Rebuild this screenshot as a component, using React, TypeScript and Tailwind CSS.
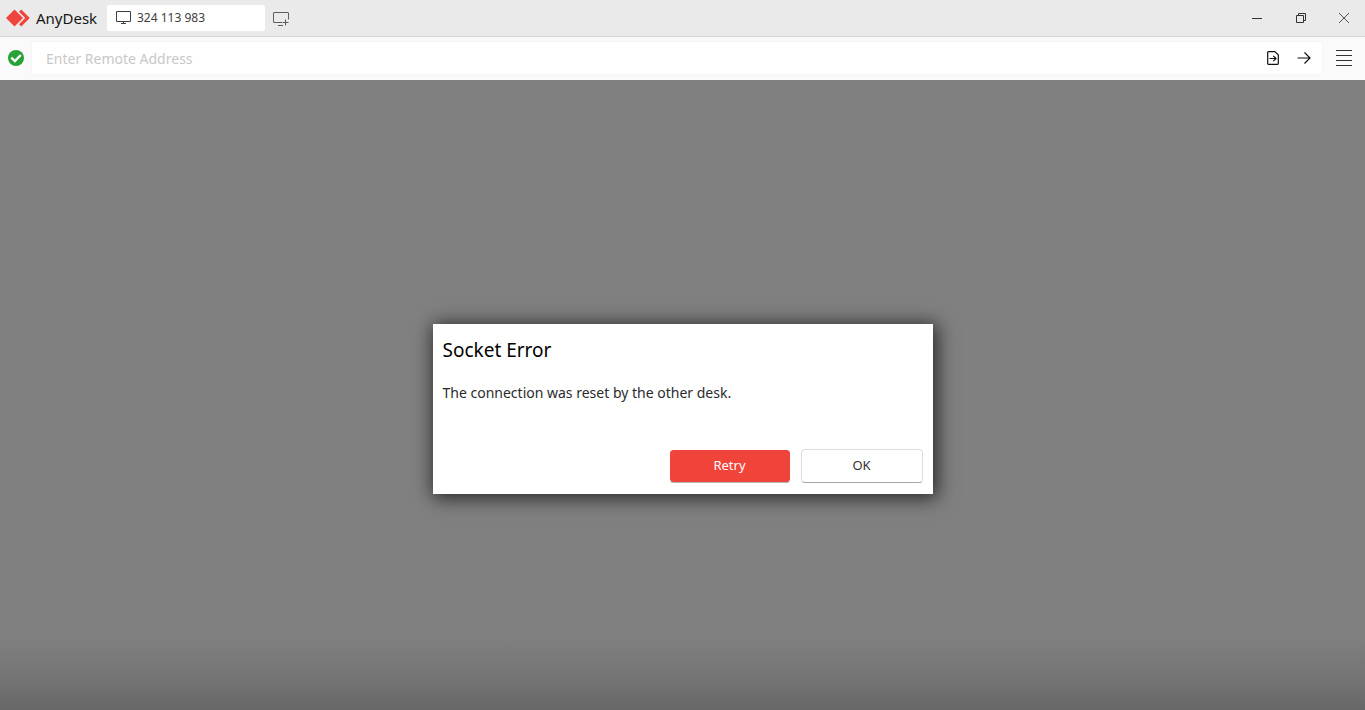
import React, { useState } from 'react';

function Logo() {
  return (
    <svg width="24" height="18" viewBox="0 0 24 18" fill="#ef443b" aria-hidden="true">
      <path d="M8.5 0.5 17 9 8.5 17.5 0 9Z" />
      <path d="M13 2.8 15.3 0.5 23.8 9 15.3 17.5 13 15.2 19.2 9Z" />
    </svg>
  );
}

function MonitorIcon() {
  return (
    <svg width="16" height="14" viewBox="0 0 16 14" fill="none" stroke="#3c3f44" aria-hidden="true">
      <path d="M.5 .5H14.5V10.5H.5ZM7.5 10.5V12M5 12.5H10" />
    </svg>
  );
}

function NewTabIcon() {
  return (
    <svg width="18" height="16" viewBox="0 0 18 16" fill="none" stroke="#5c5c5c" aria-hidden="true">
      <path d="M10 11.5H2Q1.5 11.5 1.5 11V2Q1.5 1.5 2 1.5H16Q16.5 1.5 16.5 2V8.5M13.5 8.5V14.5M10.5 11.5H16.5M6 14.5H11" />
    </svg>
  );
}

function TitleBar() {
  return (
    <header className="flex h-[37px] items-center border-b border-[#d4d4d4] bg-[#eaeaea] pl-1.5">
      <Logo />
      <span className="ml-1.5 w-[71px] text-[15px] leading-5 text-[#161616]">AnyDesk</span>
      <button className="flex h-[26px] w-[158px] items-center gap-[5px] rounded-xs bg-white pl-[9px] text-[12px] text-[#404040]">
        <MonitorIcon />
        324 113 983
      </button>
      <button aria-label="New tab" className="ml-[7px] pt-0.5">
        <NewTabIcon />
      </button>
      <div className="ml-auto flex">
        <button aria-label="Minimize" className="flex h-9 w-11 items-center justify-center">
          <svg width="12" height="12" viewBox="0 0 12 12" fill="none" stroke="#333" aria-hidden="true">
            <path d="M1 6.5H11" />
          </svg>
        </button>
        <button aria-label="Restore" className="flex h-9 w-11 items-center justify-center">
          <svg width="12" height="12" viewBox="0 0 12 12" fill="none" stroke="#333" aria-hidden="true">
            <path d="M1.5 3.5H8.5V10.5H1.5ZM3.5 3.5V1.5H10.5V8.5H8.5" />
          </svg>
        </button>
        <button aria-label="Close" className="flex h-9 w-[42px] items-center justify-center">
          <svg width="12" height="12" viewBox="0 0 12 12" fill="none" stroke="#555" aria-hidden="true">
            <path d="M1 1 11 11M11 1 1 11" />
          </svg>
        </button>
      </div>
    </header>
  );
}

function AddressBar() {
  const [address, setAddress] = useState('');
  return (
    <div className="flex h-[43px] items-center bg-[#fafafa] pb-px pl-2">
      <svg width="16" height="16" viewBox="0 0 16 16" role="img" aria-label="Ready">
        <circle cx="8" cy="8" r="8" fill="#27a237" />
        <path d="M3.3 7.6 6.9 11 12.8 5" fill="none" stroke="#fff" strokeWidth="2.4" />
      </svg>
      <form className="ml-[7px] flex h-[34px] flex-1 items-center border border-[#f5f5f5] bg-white pl-3.5" onSubmit={(e) => e.preventDefault()}>
        <input
          aria-label="Remote address"
          placeholder="Enter Remote Address"
          value={address}
          onChange={(e) => setAddress(e.target.value)}
          className="h-8 min-w-0 flex-1 text-[14px] text-[#222] outline-none placeholder:text-[#c8c8c8]"
        />
        <button type="button" aria-label="Transfer files" className="flex h-8 w-[30px] items-center justify-center">
          <svg width="12" height="14" viewBox="0 0 12 14" fill="none" stroke="#111" strokeWidth="1.2" strokeLinejoin="round" aria-hidden="true">
            <path d="M1.5 .7H8L11.3 4V12.5Q11.3 13.3 10.5 13.3H1.5Q.7 13.3 .7 12.5V1.5Q.7 .7 1.5 .7ZM2.5 7.5H9M6.3 4.8 9 7.5 6.3 10.2" />
          </svg>
        </button>
        <button type="submit" aria-label="Connect" className="mr-0.5 flex h-8 w-8 items-center justify-center">
          <svg width="14" height="14" viewBox="0 0 14 14" fill="none" stroke="#111" strokeWidth="1.2" aria-hidden="true">
            <path d="M.5 7H13M7.5 1.5 13 7 7.5 12.5" />
          </svg>
        </button>
      </form>
      <button aria-label="Menu" className="flex h-9 w-[42px] items-center justify-center">
        <svg width="16" height="18" viewBox="0 0 16 18" stroke="#333" aria-hidden="true">
          <path d="M0 1.5H16M0 6.5H16M0 11.5H16M0 16.5H16" />
        </svg>
      </button>
    </div>
  );
}

function ErrorDialog() {
  return (
    <section
      role="alertdialog"
      aria-labelledby="dialog-title"
      aria-describedby="dialog-message"
      className="w-[500px] bg-white px-2.5 pt-3 pb-2.5 shadow-[2px_2px_18px_2px_rgba(0,0,0,0.7)]"
    >
      <h1 id="dialog-title" className="text-[19px] leading-7 text-black">Socket Error</h1>
      <p id="dialog-message" className="mt-[19px] text-[14px] leading-5 text-[#2b2b2b]">
        The connection was reset by the other desk.
      </p>
      <div className="mt-[46px] flex justify-end gap-2.5 text-[13px]">
        <button className="h-[34px] w-[122px] rounded-sm border border-white border-b-[#b5b5b5] bg-[#f0433a] bg-clip-padding text-white">Retry</button>
        <button className="mb-px h-[34px] w-[122px] rounded-sm border border-[#dedede] border-b-[#a5a5a5] bg-white text-[#333]">OK</button>
      </div>
    </section>
  );
}

export default function App() {
  return (
    <div className="flex min-h-screen flex-col font-['Noto_Sans','Open_Sans',sans-serif]">
      <TitleBar />
      <AddressBar />
      <main className="flex flex-1 items-center justify-center bg-[linear-gradient(to_top,#686767_0px,#747474_30px,#808080_75px)] pt-7">
        <ErrorDialog />
      </main>
    </div>
  );
}
